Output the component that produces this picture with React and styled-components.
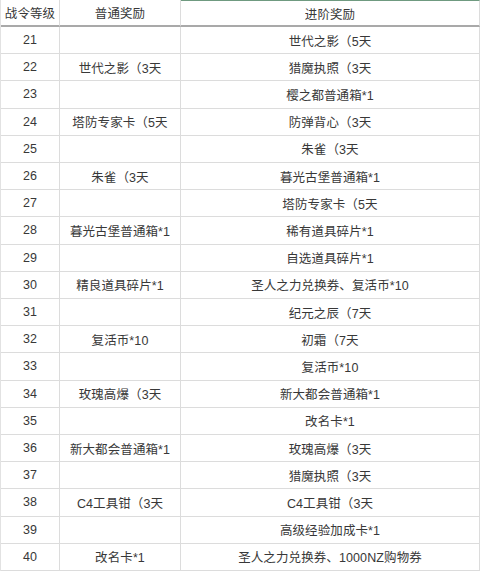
import React from "react";
import styled, { createGlobalStyle } from "styled-components";

const Global = createGlobalStyle`
  html, body { margin: 0; padding: 0; background: #fff; }
  body { font-family: "Liberation Sans", "Noto Sans CJK SC", sans-serif; }
`;

const Table = styled.div`
  display: grid;
  grid-template-columns: 59px 121px 1fr;
  grid-template-rows: 27px repeat(20, 1fr);
  width: 480px;
  height: 571px;
  box-sizing: border-box;
  border-left: 1px solid #e2e2e2;
  overflow: hidden;
`;

const Cell = styled.div`
  display: flex;
  align-items: center;
  justify-content: center;
  box-sizing: border-box;
  border-right: 1px solid #dcdcdc;
  border-bottom: 1px solid ${(p) => (p.$head ? "#a9a9a9" : "#dcdcdc")};
  ${(p) => (p.$head ? "border-bottom-width: 2px;" : "")}
  ${(p) => (p.$accent ? "border-top: 1px solid #6f9a80;" : "")}
  font-size: 12.5px;
  color: #383838;
  white-space: nowrap;
  letter-spacing: 0.1px;
`;

const rows = [
  [21, "", "世代之影（5天"],
  [22, "世代之影（3天", "猎魔执照（3天"],
  [23, "", "樱之都普通箱*1"],
  [24, "塔防专家卡（5天", "防弹背心（3天"],
  [25, "", "朱雀（3天"],
  [26, "朱雀（3天", "暮光古堡普通箱*1"],
  [27, "", "塔防专家卡（5天"],
  [28, "暮光古堡普通箱*1", "稀有道具碎片*1"],
  [29, "", "自选道具碎片*1"],
  [30, "精良道具碎片*1", "圣人之力兑换券、复活币*10"],
  [31, "", "纪元之辰（7天"],
  [32, "复活币*10", "初霜（7天"],
  [33, "", "复活币*10"],
  [34, "玫瑰高爆（3天", "新大都会普通箱*1"],
  [35, "", "改名卡*1"],
  [36, "新大都会普通箱*1", "玫瑰高爆（3天"],
  [37, "", "猎魔执照（3天"],
  [38, "C4工具钳（3天", "C4工具钳（3天"],
  [39, "", "高级经验加成卡*1"],
  [40, "改名卡*1", "圣人之力兑换券、1000NZ购物券"],
];

export default function App() {
  return (
    <>
      <Global />
      <Table>
        <Cell $head>战令等级</Cell>
        <Cell $head>普通奖励</Cell>
        <Cell $head $accent>进阶奖励</Cell>
        {rows.map(([lv, a, b]) => (
          <React.Fragment key={lv}>
            <Cell>{lv}</Cell>
            <Cell>{a}</Cell>
            <Cell>{b}</Cell>
          </React.Fragment>
        ))}
      </Table>
    </>
  );
}
